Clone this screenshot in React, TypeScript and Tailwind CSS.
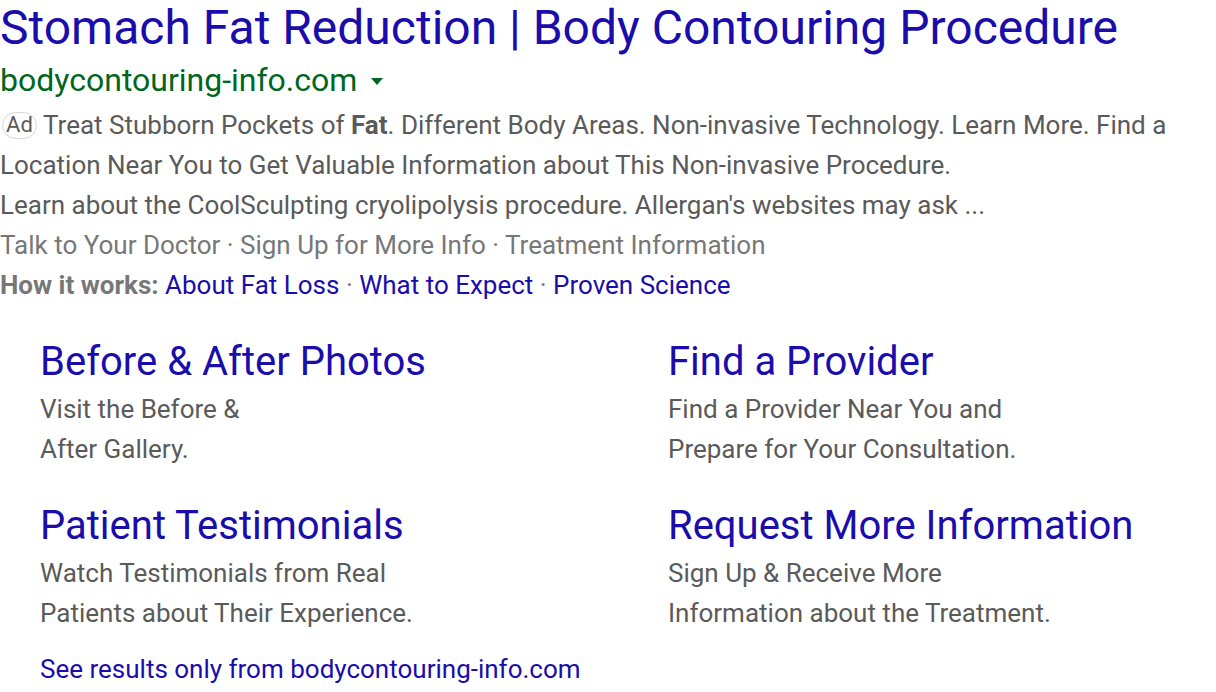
import React from "react";

const sitelinks = [
  {
    title: "Before & After Photos",
    lines: ["Visit the Before &", "After Gallery."],
  },
  {
    title: "Find a Provider",
    lines: ["Find a Provider Near You and", "Prepare for Your Consultation."],
  },
  {
    title: "Patient Testimonials",
    lines: ["Watch Testimonials from Real", "Patients about Their Experience."],
  },
  {
    title: "Request More Information",
    lines: ["Sign Up & Receive More", "Information about the Treatment."],
  },
];

export default function App() {
  return (
    <div className="w-[1216px] h-[692px] overflow-hidden bg-white font-['Roboto',sans-serif]">
      <h1 className="text-[48px] leading-[56px] text-[#1a0dab] whitespace-nowrap">
        Stomach Fat Reduction | Body Contouring Procedure
      </h1>

      <div className="flex items-center h-[48px] text-[32px] text-[#006621]">
        <span>bodycontouring-info.com</span>
        <svg className="ml-[14px] mt-[2px]" width="12" height="7" viewBox="0 0 12 7">
          <path d="M0 0h12L6 7z" fill="#006621" />
        </svg>
      </div>

      <div className="mt-px text-[26px] leading-[40px] text-[#5a5a5a] whitespace-nowrap">
        <div className="flex items-center">
          <span className="ml-[2px] mr-[6px] inline-flex h-[27px] w-[35px] items-center justify-center rounded-full border border-[#d6d6d6] text-[22px] leading-none">
            Ad
          </span>
          <span>
            Treat Stubborn Pockets of <b>Fat</b>. Different Body Areas. Non-invasive Technology. Learn More. Find a
          </span>
        </div>
        <div>Location Near You to Get Valuable Information about This Non-invasive Procedure.</div>
        <div>Learn about the CoolSculpting cryolipolysis procedure. Allergan's websites may ask ...</div>
        <div className="text-[#777777]">
          Talk to Your Doctor · Sign Up for More Info · Treatment Information
        </div>
        <div className="text-[#777777]">
          <b>How it works:</b> <span className="text-[#1a0dab]">About Fat Loss</span> ·{" "}
          <span className="text-[#1a0dab]">What to Expect</span> ·{" "}
          <span className="text-[#1a0dab]">Proven Science</span>
        </div>
      </div>

      <div className="grid grid-cols-[628px_1fr] gap-y-[33px] pl-[40px] pt-[33px]">
        {sitelinks.map((s) => (
          <div key={s.title}>
            <div className="text-[40px] leading-[48px] text-[#1a0dab] whitespace-nowrap">{s.title}</div>
            <div className="mt-[3px] text-[26px] leading-[40px] text-[#5a5a5a] whitespace-nowrap">
              {s.lines.map((l) => (
                <div key={l}>{l}</div>
              ))}
            </div>
          </div>
        ))}
      </div>

      <div className="mt-[16px] pl-[40px] text-[26px] leading-[40px] text-[#1a0dab]">
        See results only from bodycontouring-info.com
      </div>
    </div>
  );
}
